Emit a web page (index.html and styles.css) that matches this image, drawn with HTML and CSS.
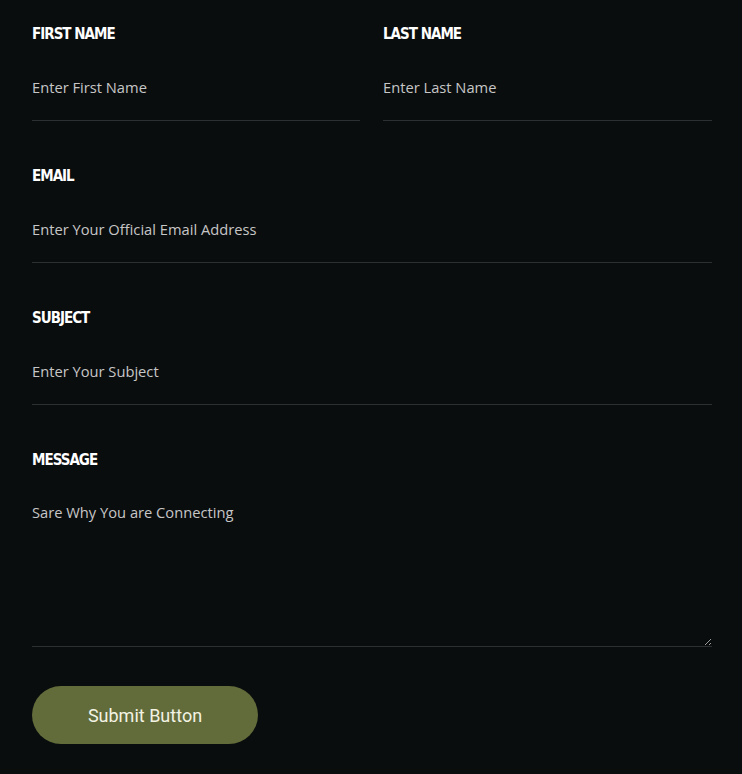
FILE: index.html
```html
<!DOCTYPE html>
<html lang="en">
<head>
	<meta charset="UTF-8">
	<meta name="viewport" content="width=device-width, initial-scale=1.0">
	<title>Contact Form</title>
	<link rel="stylesheet" href="styles.css">
</head>
<body>
	<form class="contact-form">
		<div class="row">
			<div class="field">
				<label class="field-label" for="first">First Name</label>
				<input class="field-input" id="first" type="text" placeholder="Enter First Name">
			</div>
			<div class="field">
				<label class="field-label" for="last">Last Name</label>
				<input class="field-input" id="last" type="text" placeholder="Enter Last Name">
			</div>
		</div>
		<div class="field">
			<label class="field-label" for="email">Email</label>
			<input class="field-input" id="email" type="email" placeholder="Enter Your Official Email Address">
		</div>
		<div class="field">
			<label class="field-label" for="subject">Subject</label>
			<input class="field-input" id="subject" type="text" placeholder="Enter Your Subject">
		</div>
		<div class="field">
			<label class="field-label" for="message">Message</label>
			<textarea class="field-input field-area" id="message" placeholder="Sare Why You are Connecting"></textarea>
		</div>
		<button class="submit-btn" type="button">Submit Button</button>
	</form>
</body>
</html>
```

FILE: styles.css
```css
*{
	margin: 0;
	padding: 0;
	box-sizing: border-box;
}
body{
	background-color: #0a0d0e;
	padding: 24px 30px 0 32px;
}
.contact-form{
	display: flex;
	flex-direction: column;
	gap: 45px;
}
.row{
	display: grid;
	grid-template-columns: 328px 329px;
	gap: 23px;
}
.field{
	display: flex;
	flex-direction: column;
	gap: 24px;
}
.field-label{
	font-family: "DejaVu Sans", sans-serif;
	font-stretch: condensed;
	font-weight: bold;
	font-size: 15px;
	line-height: 20px;
	letter-spacing: -1px;
	text-transform: uppercase;
	color: #ffffff;
}
.field-input{
	display: block;
	width: 100%;
	background: transparent;
	border: none;
	border-bottom: 1px solid #2c3032;
	outline: none;
	padding: 9px 0 23px;
	font-family: "Open Sans", sans-serif;
	font-size: 14.7px;
	line-height: 20px;
	color: #d0d0d0;
}
.field-input::placeholder{
	color: #c6c6c6;
	opacity: 1;
}
.field-area{
	height: 153px;
	padding: 8px 0;
	resize: vertical;
}
.submit-btn{
	align-self: flex-start;
	margin-top: -6px;
	width: 226px;
	height: 58px;
	border: none;
	border-radius: 29px;
	background-color: #626c3a;
	font-family: Roboto, sans-serif;
	font-size: 18px;
	color: #f3f3e4;
}
```
